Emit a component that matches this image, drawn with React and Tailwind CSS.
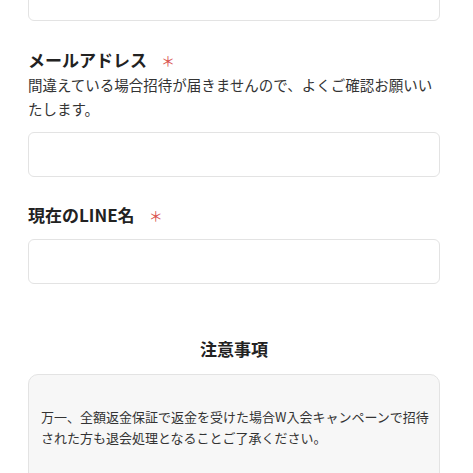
export default function App() {
    return (
        <div
            className="h-[473px] overflow-hidden bg-white pl-[28px] pr-[33px] text-[#222]"
            style={{ fontFamily: '"Noto Sans CJK JP", "Noto Sans", sans-serif' }}
        >
            <div className="-mt-[24px] h-[45px] rounded-[6px] border border-[#e3e3e3] bg-white" />

            <div className="mt-[28px] flex items-center text-[17px] font-bold leading-[22px]">
                メールアドレス
                <span className="ml-[14px] text-[14px] font-normal text-[#d9534f]">＊</span>
            </div>
            <p className="mt-[2px] text-[14.5px] leading-[24px] text-[#333]">
                間違えている場合招待が届きませんので、よくご確認お願いいたします。
            </p>
            <div className="mt-[11px] h-[45px] rounded-[6px] border border-[#e3e3e3] bg-white" />

            <div className="mt-[27px] flex items-center text-[17px] font-bold leading-[22px]">
                現在のLINE名
                <span className="ml-[14px] text-[14px] font-normal text-[#d9534f]">＊</span>
            </div>
            <div className="mt-[13px] h-[45px] rounded-[6px] border border-[#e3e3e3] bg-white" />

            <h2 className="mt-[54px] text-center text-[17px] font-bold leading-[22px]">注意事項</h2>

            <div className="mt-[14px] h-[120px] rounded-[10px] border border-[#e3e3e3] bg-[#f7f7f7] pl-[12px] pr-[6px] pt-[31px]">
                <p className="text-[13px] leading-[21px] text-[#333]">
                    万一、全額返金保証で返金を受けた場合W入会キャンペーンで招待された方も退会処理となることご了承ください。
                </p>
            </div>
        </div>
    );
}
